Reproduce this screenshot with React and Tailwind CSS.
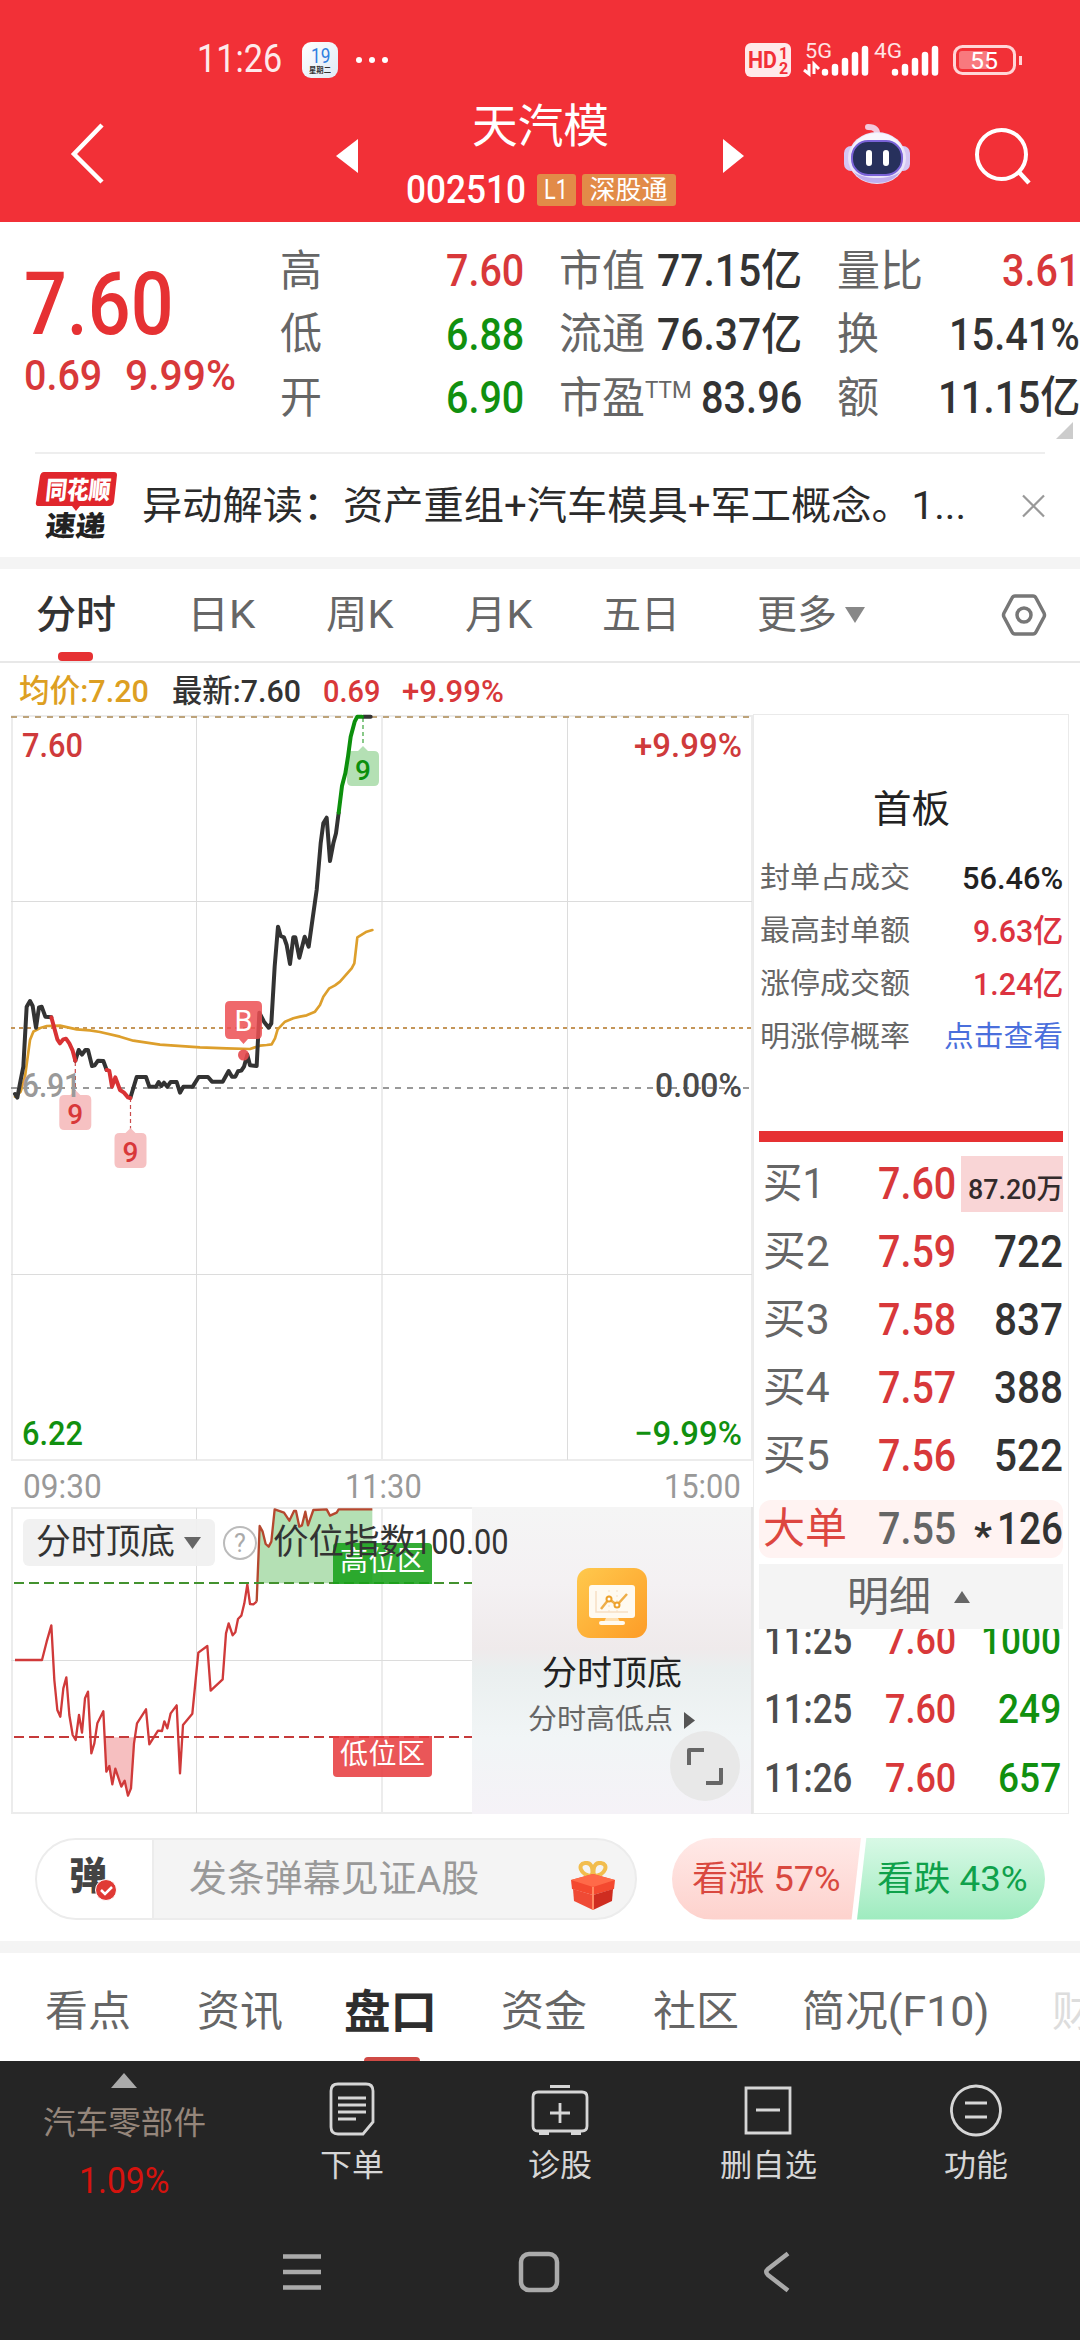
import React, { useLayoutEffect, useRef, useState } from "react";

// Squeezes or stretches one line of text to the width of its box
const Fit = ({ className = "", children }) => {
    const box = useRef(null);
    const text = useRef(null);
    const [scale, setScale] = useState(1);

    useLayoutEffect(() => {
        setScale(box.current.clientWidth / text.current.offsetWidth);
    }, [children]);

    return (
        <span ref={box} className={`inline-block shrink-0 whitespace-nowrap leading-none ${className}`}>
            <span ref={text} className="inline-block origin-left" style={{ transform: `scaleX(${scale})` }}>
                {children}
            </span>
        </span>
    );
};

const StatusBar = () => (
    <div className="flex h-[96px] items-center pt-[23px] pl-[197px] text-white">
        <Fit className="w-[85px] text-[39px] opacity-90">11:26</Fit>
        <div className="ml-[20px] flex h-[36px] w-[36px] flex-col items-center rounded-[9px] bg-gradient-to-br from-white to-[#dfeaf5] pt-[4px]">
            <Fit className="w-[19px] text-[20px] text-[#2f7fe0]">19</Fit>
            <Fit className="mt-px w-[22px] text-[8px] font-bold text-[#333]">星期二</Fit>
        </div>
        <div className="ml-[18px] flex gap-[7px]">
            <i className="h-[6px] w-[6px] rounded-full bg-white" />
            <i className="h-[6px] w-[6px] rounded-full bg-white" />
            <i className="h-[6px] w-[6px] rounded-full bg-white" />
        </div>
        <svg className="mb-[2px] ml-[355px]" width="282" height="40" viewBox="742 38 282 40">
            <rect x="744" y="42" width="46" height="34" rx="6" fill="#ffe9ea" />
            <g fill="#f23037" fontWeight="700">
                <text x="747" y="67" fontSize="23" textLength="29" lengthAdjust="spacingAndGlyphs">HD</text>
                <text x="778" y="58" fontSize="16" textLength="9">1</text>
                <text x="778" y="73" fontSize="16" textLength="9">2</text>
            </g>
            <g fill="#ffe4e5">
                <text x="804" y="57" fontSize="21" textLength="27" lengthAdjust="spacingAndGlyphs">5G</text>
                <text x="873" y="57" fontSize="21" textLength="28" lengthAdjust="spacingAndGlyphs">4G</text>
            </g>
            <g stroke="#fff" strokeWidth="6.5" strokeLinecap="round">
                <path d="M824 71v.5M834 66v5.500M844 60v11.500M854 54v17.500M864 48v23.500" />
                <path d="M894 71v.5M904 66v5.500M914 60v11.500M924 54v17.500M934 48v23.500" />
            </g>
            <path d="M803 69l5 4V63M813 73V63l5 5" fill="none" stroke="#fff" strokeWidth="3" />
            <rect x="953.500" y="45.500" width="60" height="27" rx="8" fill="none" stroke="#ffd5d7" strokeWidth="3" />
            <rect x="958" y="50" width="30" height="18" rx="3" fill="#f8797e" />
            <path d="M1019.500 55v9" stroke="#ffd5d7" strokeWidth="3" />
            <text x="969" y="68" fontSize="24" fill="#fff" textLength="28" lengthAdjust="spacingAndGlyphs">55</text>
        </svg>
    </div>
);

const Robot = () => (
    <svg width="68" height="66" viewBox="841 121 68 66">
        <path d="M875 136c1-6-2-9-9-9" fill="none" stroke="#f2c9dc" strokeWidth="6" strokeLinecap="round" />
        <rect x="842" y="146" width="14" height="25" rx="7" fill="#d5c6f4" />
        <rect x="894" y="146" width="14" height="25" rx="7" fill="#d5c6f4" />
        <ellipse cx="875" cy="158" rx="29" ry="26" fill="#e9e3f8" />
        <ellipse cx="875" cy="154" rx="26" ry="21" fill="#f8f6fd" />
        <path d="M852 172c5 8 14 11 23 11s18-3 23-11c-6 4-14 6-23 6s-17-2-23-6z" fill="#bfaeee" />
        <rect x="850" y="141" width="50" height="34" rx="16" fill="#27305c" stroke="#7a63d8" strokeWidth="2" />
        <path d="M867 153v10M884 153v10" stroke="#fff" strokeWidth="6" strokeLinecap="round" />
    </svg>
);

const TitleBar = () => (
    <div className="flex h-[126px] text-white">
        <svg className="mt-[25px] ml-[69px]" width="36" height="65" viewBox="69 121 36 65">
            <path d="M102 125L74 154l28 28" fill="none" stroke="#fff" strokeWidth="4.500" />
        </svg>
        <svg className="mt-[43px] ml-[231px]" width="22" height="34">
            <path d="M22 0v34L0 17z" fill="#fff" />
        </svg>
        <div className="mx-[38px] flex w-[289px] flex-col items-center pt-[7px]">
            <Fit className="w-[137px] text-[46px]">天汽模</Fit>
            <div className="mt-[22px] flex h-[38px] items-center">
                <Fit className="w-[120px] text-[39px] font-medium">002510</Fit>
                <span className="ml-[11px] flex h-[32px] w-[39px] items-center justify-center rounded-[3px] bg-[#e28b48]">
                    <Fit className="w-[24px] text-[28px]">L1</Fit>
                </span>
                <span className="ml-[6px] flex h-[32px] w-[94px] items-center justify-center rounded-[3px] bg-[#e28b48]">
                    <Fit className="w-[78px] text-[26px]">深股通</Fit>
                </span>
            </div>
        </div>
        <svg className="mt-[43px]" width="22" height="34">
            <path d="M0 0v34l21-17z" fill="#fff" />
        </svg>
        <div className="mt-[25px] ml-[98px]"><Robot /></div>
        <svg className="mt-[29px] ml-[62px]" width="62" height="62" viewBox="971 125 62 62">
            <circle cx="999.500" cy="154.500" r="24.500" fill="none" stroke="#fff" strokeWidth="4" />
            <path d="M1016 171l11 12" stroke="#fff" strokeWidth="4.500" />
        </svg>
    </div>
);

const RED = "text-[#d8383a]";
const GREEN = "text-[#11900f]";

const Quote = () => (
    <div className="flex h-[230px]">
        <div className="w-[280px] pt-[39px] pl-[24px]">
            <Fit className="w-[150px] text-[87px] font-medium text-[#e63133]">7.60</Fit>
            <div className={`mt-[6px] flex text-[43px] font-medium ${RED}`}>
                <Fit className="w-[78px]">0.69</Fit>
                <Fit className="ml-[23px] w-[111px]">9.99%</Fit>
            </div>
        </div>
        <div className="flex w-[244px] flex-col gap-[19.500px] pt-[27px] text-[44px] text-[#666]">
            <div className="flex h-[44px] items-center justify-between"><Fit className="w-[42px] text-[43px]">高</Fit><Fit className={`w-[78px] font-medium ${RED}`}>7.60</Fit></div>
            <div className="flex h-[44px] items-center justify-between"><Fit className="w-[42px] text-[43px]">低</Fit><Fit className={`w-[78px] font-medium ${GREEN}`}>6.88</Fit></div>
            <div className="flex h-[44px] items-center justify-between"><Fit className="w-[42px] text-[43px]">开</Fit><Fit className={`w-[78px] font-medium ${GREEN}`}>6.90</Fit></div>
        </div>
        <div className="ml-[35px] flex w-[243px] flex-col gap-[19.500px] pt-[27px] text-[44px] text-[#666]">
            <div className="flex h-[44px] items-center justify-between"><Fit className="w-[86px] text-[43px]">市值</Fit><Fit className="w-[145px] font-medium text-[#333]">77.15亿</Fit></div>
            <div className="flex h-[44px] items-center justify-between"><Fit className="w-[86px] text-[43px]">流通</Fit><Fit className="w-[145px] font-medium text-[#333]">76.37亿</Fit></div>
            <div className="flex h-[44px] items-center">
                <Fit className="w-[86px] text-[43px]">市盈</Fit>
                <Fit className="mb-[16px] w-[47px] text-[23px]">TTM</Fit>
                <Fit className="ml-[9px] w-[101px] font-medium text-[#333]">83.96</Fit>
            </div>
        </div>
        <div className="ml-[35px] w-[243px] pt-[27px] text-[44px] text-[#666]">
            <div className="flex flex-col gap-[19.500px]">
                <div className="flex h-[44px] items-center justify-between"><Fit className="w-[86px] text-[43px]">量比</Fit><Fit className={`w-[78px] font-medium ${RED}`}>3.61</Fit></div>
                <div className="flex h-[44px] items-center justify-between"><Fit className="w-[42px] text-[43px]">换</Fit><Fit className="w-[131px] font-medium text-[#333]">15.41%</Fit></div>
                <div className="flex h-[44px] items-center justify-between"><Fit className="w-[42px] text-[43px]">额</Fit><Fit className="w-[142px] font-medium text-[#333]">11.15亿</Fit></div>
            </div>
            <svg className="mt-[2px] ml-[219px]" width="17" height="17">
                <path d="M17 0v17H0z" fill="#ccc" />
            </svg>
        </div>
    </div>
);

const News = () => (
    <div className="mx-[35px] flex h-[105px] items-center border-t-2 border-[#eee] text-[#2b2b2b]">
        <svg width="84" height="70" viewBox="35 470 84 70" className="shrink-0">
            <path d="M44 471h70q3 0 3 3l-3 27q-1 4-5 4H80l-4 5-4-5H39q-4 0-3-4l4-26q1-4 4-4z" fill="#e0262c" />
            <g fontWeight="900" fontFamily="'Noto Sans CJK SC', sans-serif" transform="skewX(-6)">
                <text x="97" y="498" fontSize="25" fill="#fff" textLength="65" lengthAdjust="spacingAndGlyphs">同花顺</text>
                <text x="101" y="535" fontSize="28" fill="#222" textLength="60" lengthAdjust="spacingAndGlyphs">速递</text>
            </g>
        </svg>
        <Fit className="mt-[1px] ml-[23px] w-[824px] text-[39px]">异动解读：资产重组+汽车模具+军工概念。1...</Fit>
        <svg className="ml-auto" width="23" height="24">
            <path d="M1 1.500l21 21M22 1.500l-21 21" stroke="#999" strokeWidth="2.200" />
        </svg>
    </div>
);

const PeriodTabs = () => (
    <div className="flex h-[94px] items-center border-b-2 border-[#e8e8e8] pl-[36px] text-[39px] text-[#666]">
        <div className="relative flex h-full w-[80px] items-center font-medium text-[#333]">
            <Fit className="w-[80px]">分时</Fit>
            <i className="absolute bottom-0 left-[22px] h-[9px] w-[35px] rounded-[4px] bg-[#e63133]" />
        </div>
        <Fit className="ml-[71px] w-[68px]">日K</Fit>
        <Fit className="ml-[71px] w-[67px]">周K</Fit>
        <Fit className="ml-[72px] w-[67px]">月K</Fit>
        <Fit className="ml-[70px] w-[78px]">五日</Fit>
        <Fit className="ml-[77px] w-[80px]">更多</Fit>
        <svg className="ml-[8px]" width="20" height="16">
            <path d="M0 0h20L10 16z" fill="#888" />
        </svg>
        <svg className="ml-[136px]" width="46" height="44" viewBox="0 0 46 44" fill="none" stroke="#777" strokeWidth="3.500" strokeLinejoin="round">
            <path d="M14 3h18q2 0 3 2l8 15q1 2 0 4l-8 15q-1 2-3 2H14q-2 0-3-2L3 24q-1-2 0-4l8-15q1-2 3-2z" />
            <circle cx="23" cy="22" r="7" />
        </svg>
    </div>
);

const Legend = () => (
    <div className="flex h-[51px] items-center pl-[19px] pt-[5px] text-[32px] font-medium">
        <Fit className="w-[130px] text-[#dd9f22]">均价:7.20</Fit>
        <Fit className="ml-[23px] w-[129px] text-[#333]">最新:7.60</Fit>
        <Fit className={`ml-[22px] w-[57px] ${RED}`}>0.69</Fit>
        <Fit className={`ml-[22px] w-[102px] ${RED}`}>+9.99%</Fit>
    </div>
);

const Flag = ({ x, y, fill, color }) => (
    <g>
        <path d={`M${x - 11} ${y + 5}h6l5-5 5 5h6q5 0 5 5v25q0 5-5 5h-22q-5 0-5-5v-25q0-5 5-5z`} fill={fill} />
        <text x={x} y={y + 34} fontSize="28" fontWeight="500" textAnchor="middle" fill={color}>9</text>
    </g>
);

const PriceChart = () => (
    <svg width="753" height="748" viewBox="0 714 753 748" fontFamily="Roboto, sans-serif">
        <g fill="none" stroke="#ececec" strokeWidth="2">
            <path d="M11 716H753M12 715V1461M752 715V1461M11 1460H753M382 716V1460" />
            <path d="M11 901.500H752M11 1274.500H752M196.500 716V1460M567.500 716V1460" stroke="#dcdcdc" strokeWidth="1" />
        </g>
        <path d="M11 717H751" stroke="#bda37a" strokeWidth="2" strokeDasharray="6 6" />
        <path d="M11 1028H751" stroke="#c59659" strokeWidth="2" strokeDasharray="4 4" />
        <path d="M11 1088H751" stroke="#999" strokeWidth="2" strokeDasharray="6 6" />
        <g stroke="#c94b4b" strokeWidth="1.200" strokeDasharray="4 3">
            <path d="M75.300 1062V1092M130.500 1098V1130" />
            <path d="M363 718V746" stroke="#3ba53b" />
        </g>
        <Flag x={363} y={746} fill="#b4e0b4" color="#0c8f0c" />
        <Flag x={75.300} y={1090} fill="#f6c1c2" color="#d8383a" />
        <Flag x={130.500} y={1128} fill="#f6c1c2" color="#d8383a" />
        <g transform="translate(0 700) scale(.33333)" fill="none" strokeWidth="12" strokeLinejoin="round" strokeLinecap="round">
            <path stroke="#dd9f2c" strokeWidth="8" d="M45 1190L62 1175 75 1130 90 1020 100 995Q120 982 140 978L180 977 230 988 270 991 300 996 360 1010 400 1022 480 1034 600 1042 680 1045 750 1047 780 1037 800 1035 815 1033 825 1015 833 988 855 965 880 955 900 950 920 946 945 935 960 915 970 890 988 865 1005 856 1020 845 1055 805 1063 790 1072 712 1100 695 1117 690" />
            <path stroke="#333" d="M45 1182L52 1193 60 1150 70 1100 75 1010 80 920 90 903 98 918 108 983 117 922 125 920 136 950 154 952M226 1082L236 1050 246 1064 256 1050 264 1050 276 1098 284 1096 294 1082 310 1083 320 1110M391 1194L410 1131 438 1131 448 1160 468 1160 476 1146 484 1158 492 1148 502 1160 512 1146 530 1146 540 1178 550 1160 578 1160 596 1131 624 1131 636 1145 668 1145 686 1113 696 1130 706 1130 714 1114 724 1112 732 1100 742 1064 750 1096 770 1098 778 938 792 965 806 983 814 970 824 800 834 680 842 708 852 712 860 735 870 792 880 712 886 712 898 773 914 710 926 740 938 655 950 570 962 430 970 370 980 353 990 483 1000 430 1008 400 1016 338M1090 50H1112" />
            <path stroke="#d93234" d="M154 952L163 985 172 1018 180 1030 190 1018 198 1016 208 1030 218 1052 226 1082M320 1110L328 1113 336 1160 346 1132 360 1170 372 1178 384 1192 391 1194" />
            <path stroke="#0c8f0c" d="M1016 338L1026 258 1036 220 1044 170 1052 110 1064 65 1072 50 1086 50" />
        </g>
        <circle cx="243.500" cy="1055" r="5.500" fill="#e4484c" fillOpacity=".9" />
        <path d="M230 1001h27q5 0 5 5v28q0 5-5 5h-9l-4.500 5-4.500-5h-9q-5 0-5-5v-28q0-5 5-5z" fill="#ec4f52" fillOpacity=".85" />
        <text x="243.500" y="1030.500" fontSize="29" fill="#fff" textAnchor="middle">B</text>
        <g fontSize="34" fontWeight="500">
            <text x="22" y="757" textLength="61" lengthAdjust="spacingAndGlyphs" fill="#cf3a3b">7.60</text>
            <text x="634" y="757" textLength="108" lengthAdjust="spacingAndGlyphs" fill="#cf3a3b">+9.99%</text>
            <text x="22" y="1097" textLength="59" lengthAdjust="spacingAndGlyphs" fill="#999">6.91</text>
            <text x="655" y="1097" textLength="87" lengthAdjust="spacingAndGlyphs" fill="#4a4a4a">0.00%</text>
            <text x="22" y="1445" textLength="61" lengthAdjust="spacingAndGlyphs" fill="#11900f">6.22</text>
            <text x="634" y="1445" textLength="108" lengthAdjust="spacingAndGlyphs" fill="#11900f">−9.99%</text>
        </g>
    </svg>
);

const IndexChart = () => (
    <svg width="472" height="307" viewBox="0 1507 472 307" className="shrink-0">
        <g fill="none" stroke="#ececec" strokeWidth="2">
            <path d="M11 1508H472M12 1507V1814M11 1813H472M382 1508V1813" />
            <path d="M11 1660.500H472M196.500 1508V1813" stroke="#dcdcdc" strokeWidth="1" />
        </g>
        <g transform="translate(0 1400) scale(.33333)" fill="none" strokeWidth="7" strokeLinejoin="round">
            <path fill="#b4e0b4" d="M772 550L779 378 788 395 797 432 806 440 814 425 824 328 852 338 868 362 882 333 888 333 898 380 906 376 916 335 924 376 940 330 980 328 990 347 1010 338 1016 328 1117 328V550z" />
            <path fill="#f6bfc0" d="M315 1012L319 1115 328 1098 337 1153 346 1106 364 1160 374 1142 384 1187 393 1165 402 1012z" />
            <path stroke="#d03a3a" d="M45 780H126L140 725 154 676 163 840 172 930 181 950 190 865 199 832 208 945 218 1005 227 1020 237 945 246 998 255 895 264 875 274 1060 283 1030 292 970 310 934 319 1115 328 1098 337 1153 346 1106 364 1160 374 1142 384 1187 393 1165 402 1030 411 970 438 928 448 1033 474 992 486 993 493 964 502 985 512 940 530 916 540 1120 549 975 577 941 595 758 622 738 632 872 668 838 678 700 686 670 698 706 706 697 714 657 724 647 733 610 742 553 750 612 760 613 770 605" />
            <path stroke="#b5482f" d="M770 605L779 378 788 395 797 432 806 440 814 425 824 328 852 338 868 362 882 333 888 333 898 380 906 376 916 335 924 376 940 330 980 328 990 347 1010 338 1016 328 1117 328" />
        </g>
        <path d="M14 1583H472" stroke="#43922f" strokeWidth="2.200" strokeDasharray="10 5" />
        <path d="M14 1737H472" stroke="#c63a3a" strokeWidth="2.200" strokeDasharray="10 5" />
        <path d="M337 1543h91q4 0 4 4v37h-99v-37q0-4 4-4z" fill="#18a01a" fillOpacity=".88" />
        <path d="M333 1736h99v37q0 4-4 4h-91q-4 0-4-4z" fill="#e63a3c" fillOpacity=".86" />
        <g fontSize="28" fill="#fff">
            <text x="340" y="1571" textLength="85">高位区</text>
            <text x="340" y="1764" textLength="85">低位区</text>
        </g>
    </svg>
);

const SubChart = () => (
    <div className="relative flex h-[307px]">
        <IndexChart />
        <div className="flex w-[281px] flex-col items-center border-r-2 border-[#e6e6e6] bg-[linear-gradient(180deg,#f5f5f5_0%,#f4f1f3_25%,#efeaeb_46%,#eaefef_53%,#f1f5f6_75%,#f5f2f7_100%)] pt-[61px]">
            <svg width="70" height="70">
                <defs>
                    <linearGradient id="amber" x1="0" y1="0" x2="1" y2="1">
                        <stop offset="0" stopColor="#ffc94d" />
                        <stop offset="1" stopColor="#fd9c27" />
                    </linearGradient>
                </defs>
                <rect width="70" height="70" rx="13" fill="url(#amber)" />
                <rect x="12" y="17" width="46" height="33" rx="3" fill="#fffaf0" />
                <path d="M29 50h12l2 4H27z" fill="#ffe0b0" />
                <rect x="22" y="53" width="26" height="4" rx="2" fill="#fffaf0" />
                <path d="M19 23v21h32" fill="none" stroke="#f7e0c4" strokeWidth="1.500" />
                <path d="M32 22v24M40 22v24" stroke="#f7e0c4" strokeDasharray="2 3" />
                <path d="M24 41l8-10 8 6 10-11" fill="none" stroke="#eeae49" strokeWidth="2.500" />
                <circle cx="32" cy="31" r="2.500" fill="#fff" stroke="#eda12b" strokeWidth="2" />
                <circle cx="40" cy="37" r="2.500" fill="#fff" stroke="#eda12b" strokeWidth="2" />
            </svg>
            <Fit className="mt-[18px] w-[140px] text-[34px] text-[#222]">分时顶底</Fit>
            <div className="mt-[16px] flex items-center">
                <Fit className="w-[145px] text-[28px] text-[#666]">分时高低点</Fit>
                <svg className="ml-[11px]" width="11" height="17">
                    <path d="M0 0l11 8.500L0 17z" fill="#555" />
                </svg>
            </div>
        </div>
        <div className="absolute top-[12px] left-[23px] flex h-[47px] items-center">
            <div className="flex h-[47px] w-[192px] items-center rounded-[6px] bg-[#f0f0f0]/90 pl-[13px]">
                <Fit className="w-[139px] text-[35px] text-[#333]">分时顶底</Fit>
                <svg className="ml-[9px]" width="17" height="12">
                    <path d="M0 0h17L8.500 12z" fill="#666" />
                </svg>
            </div>
            <svg className="ml-[7px]" width="36" height="36">
                <circle cx="18" cy="18" r="16" fill="none" stroke="#bbb" strokeWidth="2" />
                <text x="18" y="27" fontSize="25" fill="#aaa" textAnchor="middle">?</text>
            </svg>
            <Fit className="ml-[15px] w-[142px] text-[35px] text-[#333]">价位指数</Fit>
            <Fit className="-ml-[1px] w-[95px] text-[35px] text-[#333]">100.00</Fit>
        </div>
        <svg className="absolute top-[224px] left-[670px]" width="70" height="70">
            <circle cx="35" cy="35" r="35" fill="#e8e8e8" />
            <path d="M19 34V19h15M51 37v15H36" fill="none" stroke="#666" strokeWidth="4" strokeLinejoin="round" />
        </svg>
    </div>
);

const boardStats = [
    ["封单占成交", "56.46%", "w-[101px] text-[32px] font-medium text-[#222]"],
    ["最高封单额", "9.63亿", "w-[90px] text-[32px] font-medium text-[#dc3340]"],
    ["涨停成交额", "1.24亿", "w-[90px] text-[32px] font-medium text-[#dc3340]"],
    ["明涨停概率", "点击查看", "w-[119px] text-[29px] text-[#4a6fdc]"],
];

const bids = [
    ["买1", "7.60", "87.20万"],
    ["买2", "7.59", "722"],
    ["买3", "7.58", "837"],
    ["买4", "7.57", "388"],
    ["买5", "7.56", "522"],
];

const ticks = [
    ["11:25", "7.60", "1000", "w-[80px]"],
    ["11:25", "7.60", "249", "w-[63px]"],
    ["11:26", "7.60", "657", "w-[63px]"],
];

const OrderPanel = () => (
    <div className="flex h-[1100px] w-[316px] flex-col border border-[#eaeaea] px-[5px]">
        <div className="flex h-[137px] items-end justify-center pb-[24px]">
            <Fit className="w-[77px] text-[38px] text-[#222]">首板</Fit>
        </div>
        <div className="h-[279px]">
            {boardStats.map(([label, value, cls]) => (
                <div key={label} className="flex h-[53px] items-center justify-between pb-[1px] pl-px">
                    <Fit className="w-[150px] text-[29px] text-[#666]">{label}</Fit>
                    <Fit className={cls}>{value}</Fit>
                </div>
            ))}
        </div>
        <div className="h-[11px] bg-[#e63133]" />
        <div className="h-[358px] pt-[8px]">
            {bids.map(([label, price, vol], i) => (
                <div key={label} className="flex h-[68px] items-center pl-[4px]">
                    <Fit className={`text-[42px] text-[#666] ${i === 0 ? "w-[62px]" : "w-[67px]"}`}>{label}</Fit>
                    <Fit className={`w-[78px] text-[44px] font-medium ${RED} ${i === 0 ? "ml-[53px]" : "ml-[48px]"}`}>{price}</Fit>
                    {i === 0 ? (
                        <span className="ml-auto flex h-[56px] w-[102px] items-center justify-end bg-[#f9d5d6] pt-[11px]">
                            <Fit className="w-[95px] text-[28px] font-medium text-[#332b2b]">{vol}</Fit>
                        </span>
                    ) : (
                        <Fit className="ml-auto w-[69px] text-[44px] font-medium text-[#333]">{vol}</Fit>
                    )}
                </div>
            ))}
        </div>
        <div className="flex h-[58px] items-center rounded-[12px] bg-[#fff3f2] pl-[4px]">
            <Fit className="w-[84px] text-[42px] text-[#dd4640]">大单</Fit>
            <Fit className="ml-[31px] w-[78px] text-[44px] font-medium text-[#666]">7.55</Fit>
            <Fit className="mt-[14px] ml-[18px] w-[18px] text-[36px] font-black text-[#333]">*</Fit>
            <Fit className="ml-auto w-[66px] text-[44px] font-medium text-[#333]">126</Fit>
        </div>
        <div className="mt-[6px] flex h-[65px] items-center bg-[#f4f4f4] pl-[88px]">
            <Fit className="mt-[2px] w-[84px] text-[41px] text-[#666]">明细</Fit>
            <svg className="ml-[23px]" width="16" height="12">
                <path d="M8 0l8 12H0z" fill="#666" />
            </svg>
        </div>
        <div className="h-[182px] overflow-hidden">
            <div className="-mt-[23px]">
                {ticks.map(([time, price, vol, w], i) => (
                    <div key={i} className="flex h-[69px] items-center pr-[2px] pl-[5px] text-[40px]">
                        <Fit className="w-[88px] font-medium text-[#4d4d4d]">{time}</Fit>
                        <Fit className={`ml-[33px] w-[71px] font-medium ${RED}`}>{price}</Fit>
                        <Fit className={`ml-auto font-medium ${GREEN} ${w}`}>{vol}</Fit>
                    </div>
                ))}
            </div>
        </div>
    </div>
);

const Gift = () => (
    <svg width="46" height="50" viewBox="0 0 46 50">
        <path d="M22 15C10 14 7 3 15 2s8 8 7 13zM24 15C36 14 39 3 31 2s-8 8-7 13z" fill="none" stroke="#f2bd4e" strokeWidth="4" />
        <path d="M1 19l22-6 22 6-1 9-21 6L2 28z" fill="#f4492f" />
        <path d="M1 19l22-6 22 6-22 7z" fill="#ff6a48" />
        <path d="M3 28l20 6v15L4 40z" fill="#ef4a35" />
        <path d="M43 28l-20 6v15l19-9z" fill="#cf2d20" />
        <path d="M23 26v23" fill="none" stroke="#ff8a62" strokeWidth="2" />
    </svg>
);

const DanmuBar = () => (
    <div className="flex h-[127px] items-center px-[35px]">
        <div className="mt-[2px] flex h-[82px] w-[602px] items-center overflow-hidden rounded-full border-2 border-[#ececec] bg-[#f4f4f4]">
            <div className="relative flex h-full w-[117px] items-center border-r-2 border-[#ececec] bg-white pl-[32px]">
                <Fit className="mb-[5px] w-[38px] text-[38px] font-black text-[#444]">弹</Fit>
                <svg className="absolute top-[38px] left-[57px]" width="24" height="24">
                    <circle cx="12" cy="12" r="10.500" fill="#e03a35" stroke="#fff" />
                    <path d="M7 12l4 4 7-7" fill="none" stroke="#fff" strokeWidth="2.500" />
                </svg>
            </div>
            <Fit className="mt-[2px] ml-[35px] w-[290px] text-[37px] text-[#999]">发条弹幕见证A股</Fit>
            <div className="mt-[14px] ml-auto pr-[19px]"><Gift /></div>
        </div>
        <div className="mt-[2px] ml-auto flex h-[82px] w-[373px] overflow-hidden rounded-full">
            <div className="-mr-[4px] flex w-[189px] items-center bg-gradient-to-b from-[#ffe9e7] to-[#fdd2cd] pt-[2px] pl-[20px] [clip-path:polygon(0_0,100%_0,95%_100%,0_100%)]">
                <Fit className="w-[149px] text-[35px] text-[#d9483f]">看涨 57%</Fit>
            </div>
            <div className="flex w-[188px] items-center bg-gradient-to-b from-[#d8f9e6] to-[#9eebbf] pt-[2px] pl-[20px] [clip-path:polygon(5%_0,100%_0,100%_100%,0_100%)]">
                <Fit className="w-[151px] text-[35px] text-[#0fa14b]">看跌 43%</Fit>
            </div>
        </div>
    </div>
);

const SectionTabs = () => (
    <div className="flex h-[108px] items-center overflow-hidden pl-[45px] pt-[9px] text-[42px] text-[#666]">
        <Fit className="w-[86px]">看点</Fit>
        <Fit className="ml-[66px] w-[86px]">资讯</Fit>
        <div className="relative ml-[61px] flex h-full items-center">
            <Fit className="w-[93px] text-[46px] font-bold text-[#2e2e2e]">盘口</Fit>
            <i className="absolute -bottom-[4px] left-[20px] h-[8px] w-[56px] rounded-[4px] bg-[#cf4a45]" />
        </div>
        <Fit className="ml-[64px] w-[86px]">资金</Fit>
        <Fit className="ml-[66px] w-[86px]">社区</Fit>
        <Fit className="ml-[63px] w-[187px]">简况(F10)</Fit>
        <Fit className="ml-[63px] w-[42px] text-[#ddd]">财</Fit>
    </div>
);

const actions = [
    {
        label: "下单",
        width: "w-[64px]",
        icon: <path d="M10 4h28q7 0 7 7v31L35 54H10q-7 0-7-7V11q0-7 7-7zM10 18h28M10 25h28M10 32h28M10 39h18" />,
    },
    {
        label: "诊股",
        width: "w-[64px]",
        icon: <path d="M2 12h44q5 0 5 5v29q0 5-5 5H2q-5 0-5-5V17q0-5 5-5zM14 6.500h20M24 23v20M14 33h20M3 53.500h10M35 53.500h10" />,
    },
    {
        label: "删自选",
        width: "w-[97px]",
        icon: <path d="M2 8h44v45H2zM12 30h24" />,
    },
    {
        label: "功能",
        width: "w-[64px]",
        icon: <path d="M24 6a24.500 24.500 0 1 1-.1 0zM13 23h22M13 37h22" />,
    },
];

const BottomBar = () => (
    <div className="h-[279px] bg-[#252525]">
        <div className="flex h-[165px]">
            <div className="flex w-[248px] flex-col items-center pt-[12px]">
                <svg width="26" height="15"><path d="M13 0l13 15H0z" fill="#aaa" /></svg>
                <Fit className="mt-[19px] w-[163px] text-[32px] text-[#95867b]">汽车零部件</Fit>
                <Fit className="mt-[24px] w-[91px] text-[36px] text-[#d5130e]">1.09%</Fit>
            </div>
            {actions.map(({ label, width, icon }) => (
                <div key={label} className="flex w-[208px] flex-col items-center pt-[19px]">
                    <svg width="60" height="62" viewBox="-6 0 60 62" fill="none" stroke="#d6d6d6" strokeWidth="2.800">{icon}</svg>
                    <Fit className={`mt-[8px] text-[31px] text-[#d6d6d6] ${width}`}>{label}</Fit>
                </div>
            ))}
        </div>
        <div className="flex items-center pt-[25px] pl-[281px]">
            <svg width="42" height="42"><path d="M2 5.500h38M2 21h38M2 36.500h38" stroke="#aaa" strokeWidth="4.500" /></svg>
            <svg className="ml-[195px]" width="42" height="42">
                <rect x="3" y="3" width="36" height="36" rx="8" fill="none" stroke="#aaa" strokeWidth="4.500" />
            </svg>
            <svg className="ml-[202px]" width="30" height="42">
                <path d="M26 2.500L6 18q-3.500 3 0 6l20 15.500" fill="none" stroke="#aaa" strokeWidth="4.500" />
            </svg>
        </div>
    </div>
);

const App = () => {
    return (
        <div className="flex h-[2340px] w-[1080px] flex-col overflow-hidden bg-white font-['Roboto','Noto_Sans_CJK_SC',sans-serif]">
            <header className="h-[222px] shrink-0 bg-[#f23037]">
                <StatusBar />
                <TitleBar />
            </header>
            <Quote />
            <News />
            <div className="h-[12px] shrink-0 bg-[#f4f4f4]" />
            <PeriodTabs />
            <Legend />
            <main className="flex h-[1100px] shrink-0">
                <div className="w-[753px]">
                    <PriceChart />
                    <div className="flex h-[45px] items-center pt-[3px] pl-[23px] text-[34px] text-[#999]">
                        <Fit className="w-[79px]">09:30</Fit>
                        <Fit className="ml-[243px] w-[77px]">11:30</Fit>
                        <Fit className="ml-[242px] w-[77px]">15:00</Fit>
                    </div>
                    <SubChart />
                </div>
                <OrderPanel />
            </main>
            <DanmuBar />
            <div className="h-[12px] shrink-0 bg-[#f4f4f4]" />
            <SectionTabs />
            <BottomBar />
        </div>
    );
};

export default App;
